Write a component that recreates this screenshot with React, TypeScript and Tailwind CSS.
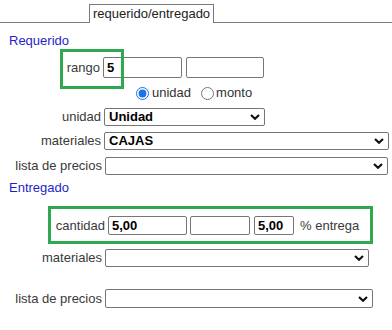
import { ReactNode } from "react"

const Chevron = () => (
  <svg
    className="pointer-events-none absolute right-[5px] top-1/2 -translate-y-1/2"
    width="10"
    height="7"
    viewBox="0 0 10 7"
  >
    <path d="M1 1.5 L5 5.2 L9 1.5" fill="none" stroke="#111" strokeWidth="2.2" />
  </svg>
)

const Select = ({ value, className }: { value?: string; className: string }) => (
  <div className={`relative ${className}`}>
    <select className="h-full w-full appearance-none rounded-[2px] border border-[#767676] bg-white pl-[4px] font-bold text-black outline-none">
      <option>{value ?? ""}</option>
    </select>
    <Chevron />
  </div>
)

const Input = ({ value, className }: { value?: string; className: string }) => (
  <input
    readOnly
    value={value ?? ""}
    className={`rounded-[2px] border border-[#767676] bg-white pl-[3px] font-bold text-black outline-none ${className}`}
  />
)

const Row = ({ label, children, className = "", labelW = "w-[101px]" }: { label: string; children: ReactNode; className?: string; labelW?: string }) => (
  <div className={`flex items-center ${className}`}>
    <span className={`${labelW} shrink-0 pr-[3px] text-right text-[#3a3a3a]`}>{label}</span>
    {children}
  </div>
)

const App = () => {
  return (
    <div className="relative h-[330px] w-[392px] overflow-hidden bg-white font-['Liberation_Sans',Arial,sans-serif] text-[13px] leading-[16px] text-[#3a3a3a]">
      <div className="flex h-[23px] items-end pt-[4px]">
        <div className="h-full w-[89px] border-b border-[#7a7a7a]" />
        <div className="flex h-[19px] items-center border border-b-0 border-[#7a7a7a] px-[3px] text-[#222]">
          requerido/entregado
        </div>
        <div className="h-full flex-1 border-b border-[#7a7a7a]" />
      </div>

      <div className="mt-[10px] pl-[9px] text-[#1f1fc8]">Requerido</div>

      <Row label="rango" className="mt-[8px]" labelW="w-[103px]">
        <Input value="5" className="h-[21px] w-[79px]" />
        <Input className="ml-[4px] h-[21px] w-[78px]" />
      </Row>

      <div className="mt-[7px] flex h-[16px] items-center pl-[136px] text-[#333]">
        <input type="radio" name="tipo" defaultChecked className="m-0 h-[13px] w-[13px] accent-[#1a73e8]" />
        <span className="ml-[3px]">unidad</span>
        <input type="radio" name="tipo" className="m-0 ml-[10px] h-[13px] w-[13px]" />
        <span className="ml-[2px]">monto</span>
      </div>

      <Row label="unidad" className="mt-[7px]" labelW="w-[104px]">
        <Select value="Unidad" className="h-[18px] w-[161px]" />
      </Row>
      <Row label="materiales" className="mt-[6px]" labelW="w-[104px]">
        <Select value="CAJAS" className="h-[18px] w-[285px]" />
      </Row>
      <Row label="lista de precios" className="mt-[7px]" labelW="w-[105px]">
        <Select className="h-[18px] w-[283px]" />
      </Row>

      <div className="mt-[5px] pl-[9px] text-[#1f1fc8]">Entregado</div>

      <Row label="cantidad" className="mt-[20px]" labelW="w-[108px]">
        <Input value="5,00" className="h-[19px] w-[79px]" />
        <Input className="ml-[3px] h-[19px] w-[60px]" />
        <Input value="5,00" className="ml-[4px] h-[19px] w-[40px]" />
        <span className="ml-[6px]">% entrega</span>
      </Row>

      <Row label="materiales" className="mt-[14px]" labelW="w-[105px]">
        <Select className="h-[18px] w-[264px]" />
      </Row>
      <Row label="lista de precios" className="mt-[22px]" labelW="w-[105px]">
        <Select className="h-[19px] w-[268px]" />
      </Row>

      <div className="pointer-events-none absolute left-[60px] top-[49px] h-[40px] w-[64px] border-[3px] border-[#2fa84f]" />
      <div className="pointer-events-none absolute left-[48px] top-[206px] h-[38px] w-[325px] border-[3px] border-[#2fa84f]" />
    </div>
  )
}

export default App
